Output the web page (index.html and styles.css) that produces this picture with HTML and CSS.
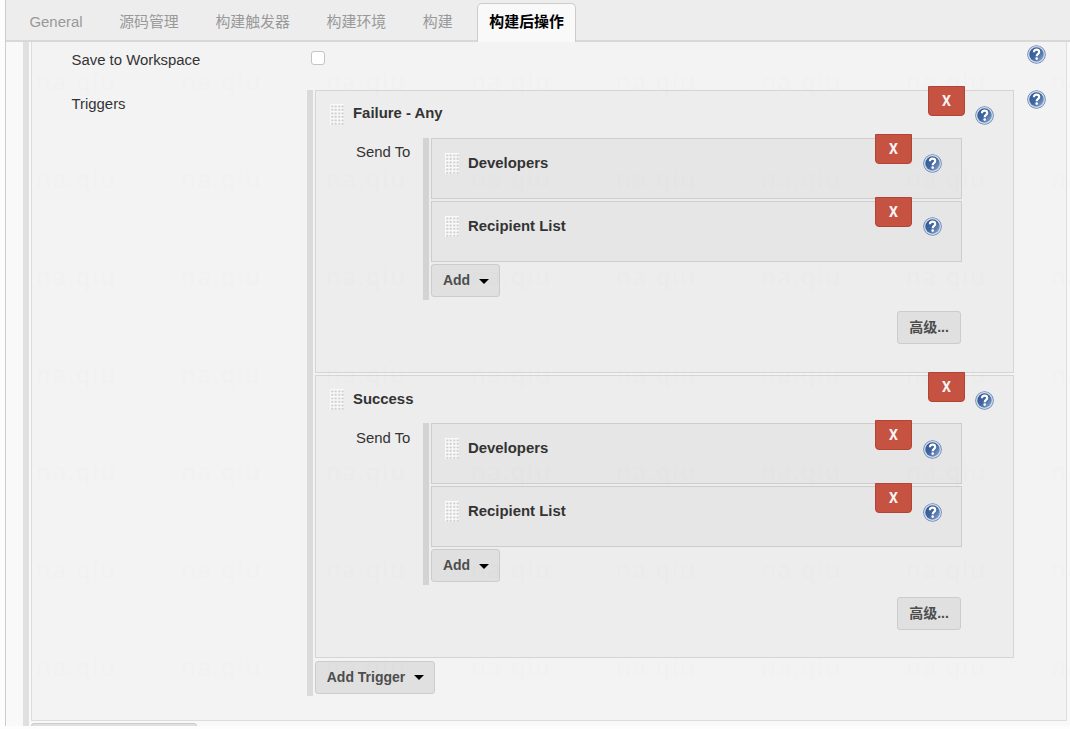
FILE: index.html
```
<!DOCTYPE html>
<html lang="zh">
<head>
    <meta charset="utf-8">
    <title>构建后操作</title>
    <link rel="stylesheet" href="styles.css">
</head>
<body>

<svg class="defs" width="0" height="0">
    <defs>
        <linearGradient id="helpFill" x1="0" y1="0" x2="1" y2="1">
            <stop offset="0" stop-color="#2f5596"/>
            <stop offset="0.5" stop-color="#41669f"/>
            <stop offset="1" stop-color="#90add4"/>
        </linearGradient>
        <symbol id="help" viewBox="0 0 19 19">
            <circle cx="9.500" cy="9.500" r="9.300" fill="#6684b3"/>
            <circle cx="9.500" cy="9.500" r="8.500" fill="#d3ddec"/>
            <circle cx="9.500" cy="9.500" r="7.200" fill="url(#helpFill)"/>
            <path d="M6.900 7.200C6.900 5.200 8.200 4.700 9.500 4.700s2.700.8 2.700 2.300C12.200 8.900 9.700 9 9.700 11.200" fill="none" stroke="#fff" stroke-width="2.200"/>
            <circle cx="9.700" cy="13.600" r="1.300" fill="#fff"/>
        </symbol>
        <pattern id="dots" width="3.500" height="3.500" patternUnits="userSpaceOnUse">
            <rect x="1.200" y="1.500" width="2" height="1.700" fill="#c4c4c4"/>
        </pattern>
        <symbol id="drag" viewBox="0 0 14 21">
            <rect width="14" height="21" fill="#fafafa"/>
            <rect width="14" height="21" fill="url(#dots)"/>
        </symbol>
        <pattern id="mark" x="36" y="62" width="145" height="97.600" patternUnits="userSpaceOnUse">
            <text class="mark-text" x="0" y="28" textLength="79">na.qiu</text>
        </pattern>
    </defs>
</svg>

<div class="config">
    <div class="tab-bar">
        <div class="tab">General</div>
        <div class="tab">源码管理</div>
        <div class="tab">构建触发器</div>
        <div class="tab">构建环境</div>
        <div class="tab">构建</div>
        <div class="tab active">构建后操作</div>
    </div>
    <div class="config-body">
        <div class="main-chunk">
            <div class="row row-save">
                <label class="name" for="save">Save to Workspace</label>
                <div class="setting"><input id="save" class="check" type="checkbox"></div>
                <svg class="help"><use href="#help"/></svg>
            </div>
            <div class="row">
                <div class="name">Triggers</div>
                <div class="triggers">
                    <div class="trigger">
                        <div class="head">
                            <svg class="drag"><use href="#drag"/></svg>
                            <b class="title">Failure - Any</b>
                            <button class="delete">X</button>
                            <svg class="help"><use href="#help"/></svg>
                        </div>
                        <div class="send">
                            <div class="send-name">Send To</div>
                            <div class="recipients">
                                <div class="recipient">
                                    <svg class="drag"><use href="#drag"/></svg>
                                    <b class="title">Developers</b>
                                    <button class="delete">X</button>
                                    <svg class="help"><use href="#help"/></svg>
                                </div>
                                <div class="recipient">
                                    <svg class="drag"><use href="#drag"/></svg>
                                    <b class="title">Recipient List</b>
                                    <button class="delete">X</button>
                                    <svg class="help"><use href="#help"/></svg>
                                </div>
                                <button class="btn btn-add">Add<i class="caret"></i></button>
                            </div>
                        </div>
                        <div class="advanced"><button class="btn btn-advanced">高级...</button></div>
                    </div>
                    <div class="trigger">
                        <div class="head">
                            <svg class="drag"><use href="#drag"/></svg>
                            <b class="title">Success</b>
                            <button class="delete">X</button>
                            <svg class="help"><use href="#help"/></svg>
                        </div>
                        <div class="send">
                            <div class="send-name">Send To</div>
                            <div class="recipients">
                                <div class="recipient">
                                    <svg class="drag"><use href="#drag"/></svg>
                                    <b class="title">Developers</b>
                                    <button class="delete">X</button>
                                    <svg class="help"><use href="#help"/></svg>
                                </div>
                                <div class="recipient">
                                    <svg class="drag"><use href="#drag"/></svg>
                                    <b class="title">Recipient List</b>
                                    <button class="delete">X</button>
                                    <svg class="help"><use href="#help"/></svg>
                                </div>
                                <button class="btn btn-add">Add<i class="caret"></i></button>
                            </div>
                        </div>
                        <div class="advanced"><button class="btn btn-advanced">高级...</button></div>
                    </div>
                    <button class="btn btn-trigger">Add Trigger<i class="caret"></i></button>
                </div>
                <svg class="help"><use href="#help"/></svg>
            </div>
        </div>
        <button class="btn btn-step"></button>
    </div>
</div>

<svg class="watermark" width="1070" height="729">
    <rect y="60" width="1070" height="666" fill="url(#mark)"/>
</svg>

</body>
</html>
```

FILE: styles.css
```
* {
    box-sizing: border-box;
}

body {
    margin: 0;
    height: 729px;
    overflow: hidden;
    background: #fdfdfd;
    color: #333;
    font: 14.9px/20px "Liberation Sans", "Noto Sans CJK SC", sans-serif;
}

.defs {
    display: block;
}

.config {
    height: 726px;
    margin-left: 5px;
    border-left: 1px solid #ccc;
    background: #f9f9f9;
    overflow: hidden;
}

/* tabs */
.tab-bar {
    display: flex;
    gap: 12.7px;
    height: 42px;
    padding: 3px 0 0 11.5px;
    border-bottom: 2px solid #d8d8d8;
    background: #ededed;
}

.tab {
    height: 39px;
    padding: 8px 11px 0;
    border: 1px solid transparent;
    border-bottom: 0;
    color: #999;
    white-space: nowrap;
}

.tab.active {
    border-color: #ccc;
    border-radius: 5px 5px 0 0;
    background: #f9f9f9;
    color: #000;
    font-weight: bold;
}

/* panel */
.config-body {
    height: 684px;
    margin-left: 17px;
    padding-left: 2px;
    border-left: 6px solid #e0e0e0;
}

.main-chunk {
    width: 1036px;
    height: 679px;
    border: 1px solid #ddd;
    border-top: 0;
    background: #f3f3f3;
}

.row {
    display: grid;
    grid-template-columns: 236px 707px 1fr;
    padding-left: 39px;
}

.row-save {
    height: 48px;
}

.name {
    padding: 4px 0 0 0.5px;
}

.row-save .name {
    padding-top: 8px;
}

.check {
    appearance: none;
    display: block;
    width: 14px;
    height: 14px;
    margin: 9px 0 0 4px;
    border: 1px solid #c4c4c4;
    border-radius: 3px;
    background: #fff;
}

.help {
    display: block;
    flex: none;
    width: 19px;
    height: 19px;
}

.row > .help {
    margin-left: 13px;
}

.row-save > .help {
    margin-top: 3px;
}

.triggers {
    padding-left: 2px;
    border-left: 6px solid #dadada;
    height: 606px;
}

.trigger {
    height: 283px;
    margin-bottom: 2.4px;
    border: 1px solid #d5d5d5;
    background: #ededed;
}

.head, .recipient {
    display: flex;
    align-items: flex-start;
}

.head {
    height: 47px;
    padding: 0 18px 0 14px;
}

.drag {
    width: 14px;
    height: 21px;
    margin-top: 13px;
}

.title {
    margin: 12px auto 0 9px;
}

.delete {
    width: 37px;
    height: 30px;
    margin: -5px 11px 0 0;
    padding: 0;
    border: 1px solid #b24435;
    border-radius: 0 0 4px 4px;
    background: #c65242;
    color: #f5f5f5;
    font: bold 14px/28px Roboto, sans-serif;
}

.head .help {
    margin: 15px 1px 0 -1px;
}

.send {
    display: flex;
    padding-left: 40px;
}

.send-name {
    width: 67px;
    padding-top: 4px;
}

.recipients {
    width: 539px;
    height: 162px;
    padding-left: 2px;
    border-left: 6px solid #d3d3d3;
}

.recipient {
    height: 61px;
    margin-bottom: 2px;
    padding: 0 19px 0 13px;
    border: 1px solid #cdcdcd;
    background: #e6e6e6;
}

.recipient .title {
    margin-top: 14px;
}

.recipient .drag {
    margin-top: 14px;
}

.recipient .help {
    margin-top: 15px;
}

.trigger + .trigger .delete {
    margin-top: -4px;
}

.trigger + .trigger .recipient .help {
    margin-top: 16px;
}

.trigger + .trigger .head .title {
    margin-top: 13px;
}

.trigger + .trigger .send-name {
    padding-top: 5px;
}

.btn {
    display: flex;
    align-items: center;
    justify-content: center;
    height: 33px;
    padding: 0 0 1px;
    border: 1px solid #ccc;
    border-radius: 3px;
    background: #e0e0e0;
    color: #4d4d4d;
    font: bold 14px/20px "Liberation Sans", "Noto Sans CJK SC", sans-serif;
}

.btn-add {
    width: 69px;
}

.btn-trigger {
    width: 120px;
}

.btn-advanced {
    width: 64px;
}

.btn-step {
    width: 166px;
    margin-top: 2px;
}

.caret {
    margin: 2px 0 0 9px;
    border: 5px solid transparent;
    border-top: 5px solid #000;
    border-bottom: 0;
}

.btn-add, .btn-trigger {
    padding-left: 1px;
}

.advanced {
    display: flex;
    justify-content: flex-end;
    padding: 11px 52px 0 0;
}

.trigger + .trigger .advanced {
    padding-top: 12px;
}

.watermark {
    position: absolute;
    left: 0;
    top: 0;
    pointer-events: none;
}

.mark-text {
    fill: #000;
    fill-opacity: 0.008;
    font: 24px "Noto Sans", sans-serif;
}
```
